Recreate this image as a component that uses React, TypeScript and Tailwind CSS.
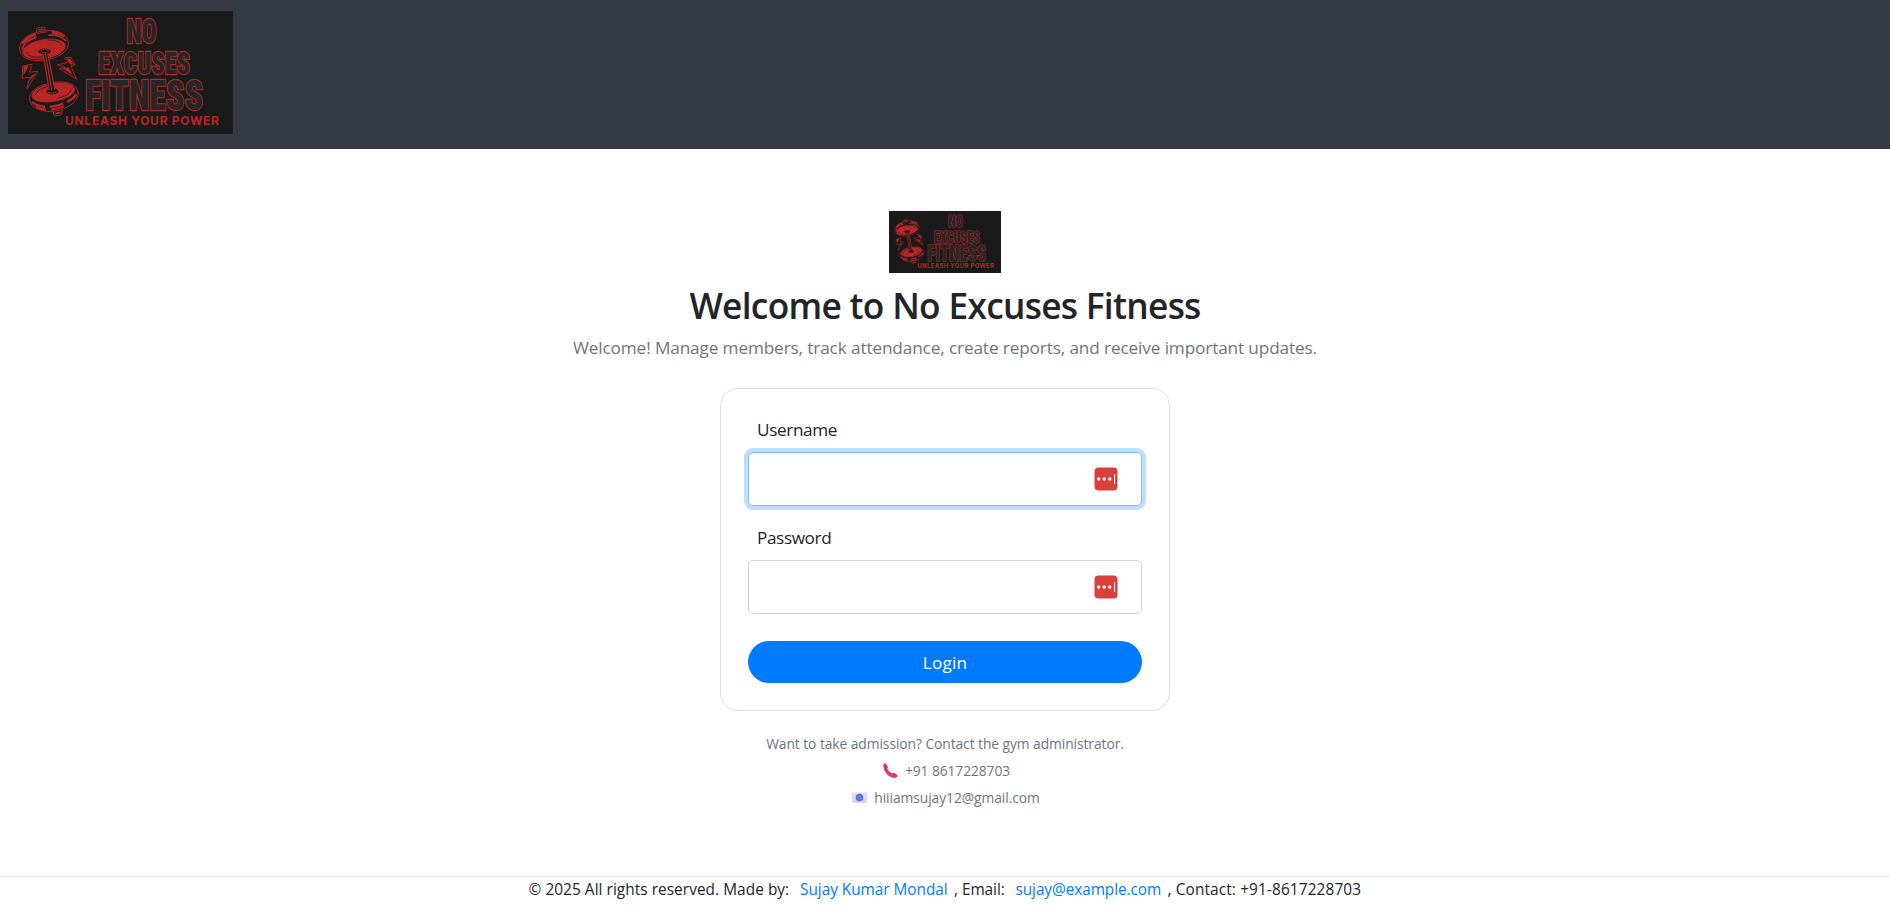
function Logo({ className }: { className: string }) {
  return (
    <svg viewBox="0 0 225 123" preserveAspectRatio="none" className={className} role="img">
      <rect width="225" height="123" fill="#1a1a1a" />
      {/* upper plate */}
      <g stroke="#b92626" strokeWidth="0.9" fill="#1a1a1a">
        <path d="M28.500 23v-4.500l1-1.500l6-1l1.500 1v5" />
        <path d="M30 19l5.500-.8" fill="none" strokeWidth="1.300" />
        <g transform="rotate(-10 36 35)">
          <path d="M11.500 35c0-9 11-15 24.500-15s24.500 6 24.500 15s-11 14-24.500 14s-24.500-5-24.500-14z" />
          <path d="M15 29c4-4 9-6 15-6.800M46 22.800c5 1.200 9 3.200 11.500 6" fill="none" strokeWidth="3" />
          <path d="M13.500 34.500c3-6 9-8.500 17-9.500M42 25.200c8 .8 13.500 4 16.500 8.500" fill="none" strokeWidth="1.800" />
          <path d="M31 21.500h10" fill="none" />
          <ellipse cx="35.500" cy="38" rx="21.500" ry="9.300" fill="#b92626" />
          <path d="M17.500 38c1 5 8 7.500 17 7.500M53.500 37c-1-4-7-6.500-13-7" fill="none" stroke="#1a1a1a" strokeWidth="0.700" />
        </g>
      </g>
      {/* lower plate */}
      <g stroke="#b92626" strokeWidth="0.9" fill="#1a1a1a">
        <path d="M45.500 99v4.500l2 1.200l5.500-.7l1-1.500v-5" />
        <path d="M47.500 102.300l5-.7" fill="none" strokeWidth="1.800" />
        <g transform="rotate(-10 46 86)">
          <path d="M21.500 85c0-8 10-13.500 24.500-13.500s24.500 5.500 24.500 13.500s-11 15-24.500 15s-24.500-7-24.500-15z" />
          <path d="M23.500 87c3 4 7 6 12 7M40 94.800c6 .6 10 .4 14-.6M58 93c5-1.300 8-3 10.500-6" fill="none" strokeWidth="2.400" />
          <path d="M26.500 92.500c3 2.500 6 3.700 9.500 4.500M41 97.700c5 .5 9 .3 13-.5" fill="none" strokeWidth="2" />
          <ellipse cx="46" cy="81.500" rx="21.500" ry="8.800" fill="#b92626" />
          <path d="M28 81c1.500-4 8.500-6.500 16-6.500M64 82c-2 4-8 5.500-15 6" fill="none" stroke="#1a1a1a" strokeWidth="0.700" />
        </g>
      </g>
      {/* bar */}
      <ellipse cx="36.700" cy="40.500" rx="6" ry="3" fill="#1a1a1a" />
      <ellipse cx="36.700" cy="40" rx="3.800" ry="1.600" fill="none" stroke="#b92626" strokeWidth="0.800" />
      <ellipse cx="44.500" cy="80.500" rx="6" ry="3" fill="#1a1a1a" />
      <path d="M34.200 42.500L40.500 80l7-1L40 42z" fill="#1a1a1a" />
      <path
        d="M35 42.500L41.200 79M37.500 42.500L43.700 79M39.800 42.500L46.800 78.500"
        stroke="#b92626"
        strokeWidth="1.200"
        fill="none"
      />
      <path d="M40.200 81.500q4.500 2 8.500-1" stroke="#b92626" strokeWidth="0.900" fill="none" />
      {/* lightning bolts */}
      <g fill="#1a1a1a" stroke="#b92626" strokeWidth="0.900">
        <path d="M14.700 55l9.500-1.800l-2.700 8l8.300-.9l-11 18l2.700-12l-7.300 1z" />
        <path d="M15.500 55.500v9l5.500-10zM22.500 65.500l5.500-3.500l-6.500 8z" fill="#b92626" stroke="none" />
        <path d="M56.500 46.800l6.500-.5l4 7.500l-4 1.300l5.300 12.600l-17-10l6-1.200l-8-2.500l11-3z" />
        <path d="M58.500 47.500l4 .3l3 5.400l-3.500.5zM55 57.500l5.500-1.500l4 8z" fill="#b92626" stroke="none" />
      </g>
      <g
        fill="#262626"
        stroke="#b22727"
        strokeWidth="2.3"
        className="font-[Roboto,sans-serif] font-black [font-stretch:75%] [paint-order:stroke]"
      >
        <text x="118.500" y="32" fontSize="33" textLength="30" lengthAdjust="spacingAndGlyphs">NO</text>
        <text x="90" y="63.300" fontSize="31" textLength="92" lengthAdjust="spacingAndGlyphs">EXCUSES</text>
        <text x="77" y="99.300" fontSize="43" textLength="118" lengthAdjust="spacingAndGlyphs">FITNESS</text>
      </g>
      <text
        x="57"
        y="114"
        fontSize="12"
        textLength="154"
        lengthAdjust="spacing"
        fill="#b92626"
        className="font-[Inter,sans-serif] font-bold"
      >
        UNLEASH YOUR POWER
      </text>
    </svg>
  );
}

function PasswordManagerIcon() {
  return (
    <svg viewBox="0 0 24 24" className="size-6">
      <rect x="0.500" y="0.500" width="23" height="23" rx="4" fill="#d93f3b" />
      <circle cx="4.700" cy="12" r="1.700" fill="#fff" />
      <circle cx="10.200" cy="12" r="1.700" fill="#fff" />
      <circle cx="15.800" cy="12" r="1.700" fill="#fff" />
      <rect x="20" y="7" width="1.100" height="10" rx="0.500" fill="#fff" />
    </svg>
  );
}

function PhoneIcon() {
  return (
    <svg viewBox="0 0 15 15" className="size-[15px]">
      <defs>
        <linearGradient id="phone" x1="0" y1="0" x2="1" y2="1">
          <stop offset="0" stopColor="#c8308a" />
          <stop offset="0.35" stopColor="#ee3458" />
          <stop offset="0.7" stopColor="#e03a72" />
          <stop offset="1" stopColor="#c239b3" />
        </linearGradient>
      </defs>
      <path
        d="M.5 1.500C1 .3 2 0 2.700.6L4.800 3.300C5.200 4 5 4.900 4.300 5.500C5 7.500 7.300 9.800 9.400 10.500C10 9.800 11 9.600 11.700 10L14.200 11.900C14.900 12.500 14.700 13.500 14 14.100C12.500 15.300 10 15.100 7.500 13.700C3.300 11.500-.3 6.500.5 1.500z"
        fill="url(#phone)"
      />
    </svg>
  );
}

function EmailIcon() {
  return (
    <svg viewBox="0 0 15 11" className="h-[11px] w-[15px]">
      <rect x="0" y="0.500" width="15" height="10" fill="#e3d9f5" />
      <path d="M0 10.500L5 6h5l5 4.500z" fill="#ddc8f5" />
      <circle cx="7.500" cy="5.500" r="3.800" fill="#4b78cf" />
      <circle cx="7.500" cy="5.500" r="1.300" fill="none" stroke="#8a8be6" strokeWidth="0.800" />
      <path d="M8.900 4v2q.3 1 1.200.2" fill="none" stroke="#8a8be6" strokeWidth="0.600" />
    </svg>
  );
}

function Field({
  id,
  label,
  type,
  labelClass,
  inputClass,
}: {
  id: string;
  label: string;
  type: string;
  labelClass: string;
  inputClass: string;
}) {
  return (
    <div className="mb-[18px] flex flex-col">
      <label htmlFor={id} className={`mb-[9px] ml-[9px] text-[17.2px] leading-[27px] ${labelClass}`}>
        {label}
      </label>
      <div className={`flex h-[54px] items-center rounded-[5px] border bg-white pr-[23px] ${inputClass}`}>
        <input id={id} type={type} className="h-full min-w-0 flex-1 bg-transparent px-3 outline-none" />
        <PasswordManagerIcon />
      </div>
    </div>
  );
}

export default function App() {
  return (
    <div className="flex min-h-[913px] flex-col bg-white font-['Open_Sans','Noto_Sans',sans-serif] text-[#212529]">
      <header className="h-[149px] bg-[#363a42] pt-[11px] pl-2">
        <Logo className="h-[123px] w-[225px]" />
      </header>

      <main className="flex h-[727px] flex-col items-center pt-[62px]">
        <Logo className="h-[62px] w-[112px]" />
        <h1 className="mt-[11px] text-[35.3px] leading-[43px] font-semibold tracking-[-0.7px]">
          Welcome to No Excuses Fitness
        </h1>
        <p className="mt-[7px] text-[17.2px] leading-[27px] tracking-[-0.122px] text-[#6c757d]">
          Welcome! Manage members, track attendance, create reports, and receive important updates.
        </p>

        <form className="mt-[27px] flex h-[323px] w-[450px] flex-col rounded-[18px] border border-[#dfdfdf] p-[27px]">
          <Field
            id="username"
            label="Username"
            type="text"
            labelClass="tracking-[-0.38px]"
            inputClass="border-[#80bdff] shadow-[0_0_0_4px_rgba(0,123,255,0.25)]"
          />
          <Field
            id="password"
            label="Password"
            type="password"
            labelClass="tracking-[-0.4px]"
            inputClass="border-[#ced4da]"
          />
          <button
            type="button"
            className="mt-[9px] h-[42px] rounded-full bg-[#007bff] text-[17.2px] leading-[27px] tracking-[0.2px] text-white"
          >
            Login
          </button>
        </form>

        <div className="mt-[19px] flex flex-col items-center text-[13.8px] leading-[27px] text-[#6c757d]">
          <p className="tracking-[-0.06px]">Want to take admission? Contact the gym administrator.</p>
          <p className="ml-[3px] flex items-center gap-[7px] tracking-[-0.07px]">
            <PhoneIcon />
            +91 8617228703
          </p>
          <p className="ml-0.5 flex items-center gap-[7px] tracking-[-0.06px]">
            <EmailIcon />
            hiiiamsujay12@gmail.com
          </p>
        </div>
      </main>

      <footer className="flex justify-center border-t border-[#eaeaea] text-[15.4px] leading-[25px] whitespace-nowrap">
        <span className="w-[271.5px] tracking-[0.05px]">© 2025 All rights reserved. Made by:</span>
        <a className="w-[154px] tracking-[-0.04px] text-[#007bff]">Sujay Kumar Mondal</a>
        <span className="w-[61.5px] tracking-[-0.05px]">, Email:</span>
        <a className="w-[152px] tracking-[-0.09px] text-[#007bff]">sujay@example.com</a>
        <span className="w-[194px] tracking-[0.12px]">, Contact: +91-8617228703</span>
      </footer>
    </div>
  );
}
